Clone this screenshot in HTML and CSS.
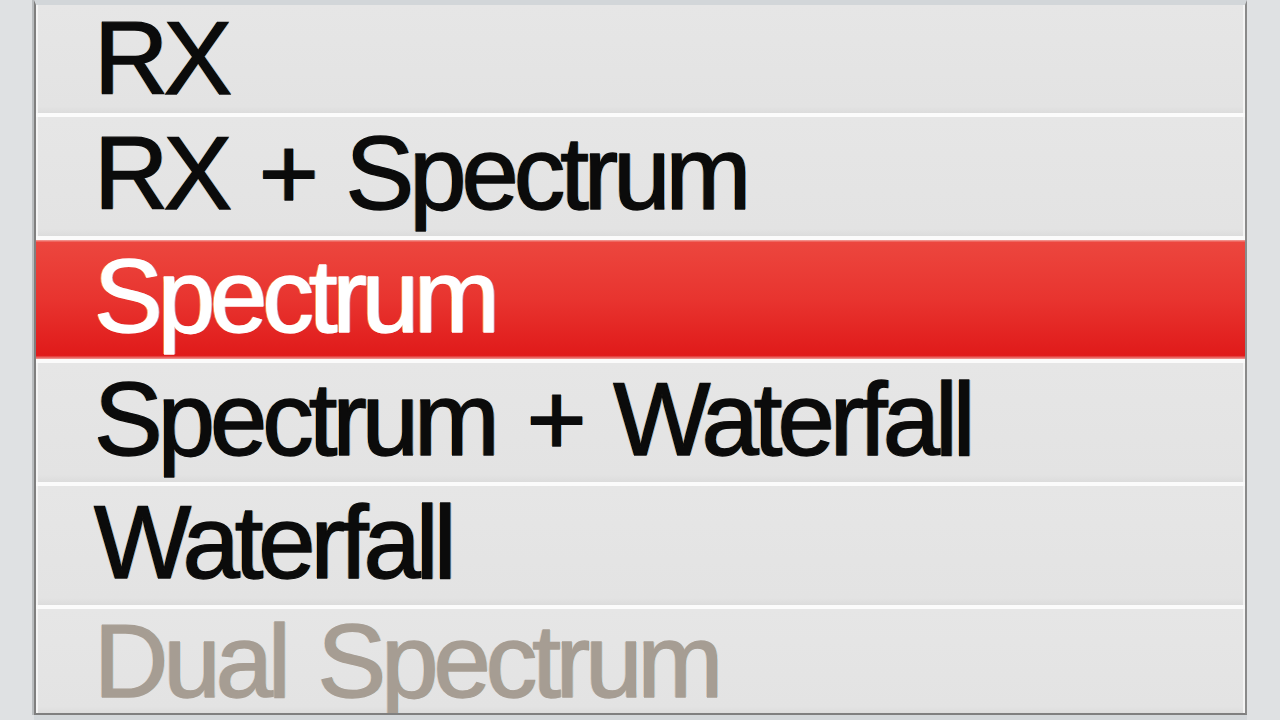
FILE: index.html
```html
<!DOCTYPE html>
<html>
<head>
<meta charset="utf-8">
<link rel="stylesheet" href="styles.css">
</head>
<body>
<div class="page">
  <ul class="menu">
    <li class="item first">RX</li>
    <li class="item">RX + Spectrum</li>
    <li class="item selected">Spectrum</li>
    <li class="item">Spectrum + Waterfall</li>
    <li class="item">Waterfall</li>
    <li class="item last disabled">Dual Spectrum</li>
  </ul>
</div>
</body>
</html>
```
FILE: styles.css
```css
html, body {
  margin: 0;
  padding: 0;
}
body {
  background: #dfe1e3;
  width: 1280px;
  height: 720px;
  overflow: hidden;
  font-family: "Liberation Sans", Arial, sans-serif;
}
.page {
  padding-left: 34px;
  height: 720px;
  box-sizing: border-box;
}
.menu {
  list-style: none;
  margin: 0;
  padding: 0;
  width: 1213px;
  height: 715px;
  box-sizing: border-box;
  border-top: 5px solid #d2d6d9;
  border-left: 2px solid #7f7f7f;
  border-right: 2px solid #8a8a8a;
  border-bottom: 2px solid #7f7f7f;
  box-shadow: -2px 0 0 #b9bcbe, 0 5px 0 #d3d7da;
  display: flex;
  flex-direction: column;
  background: #e4e4e4;
  overflow: hidden;
}
.item {
  flex: none;
  box-sizing: content-box;
  border-bottom: 4px solid #fbfbfb;
  background: linear-gradient(#e6e6e6, #e3e3e3 94%, #dcdcdc);
  box-shadow: inset 2px 0 0 #f4f4f4, inset -2px 0 0 #f4f4f4;
  padding-left: 58px;
  font-size: 103px;
  line-height: 103px;
  letter-spacing: -5px;
  word-spacing: 8px;
  color: #0b0b0b;
  -webkit-text-stroke: 1.3px #0b0b0b;
  text-shadow: -1.5px 0 rgba(240, 140, 20, 0.55), 1.5px 0 rgba(20, 140, 240, 0.55);
  padding-top: 5px;
  height: 114px;
  white-space: nowrap;
}
.item.first {
  padding-top: 2px;
  height: 106px;
}
.item.last {
  flex: 1 1 0;
  min-height: 0;
  height: auto;
  border-bottom: none;
  padding-top: 3px;
  line-height: 100px;
}
.item.selected {
  background: linear-gradient(#f3a09b, #ec463e 2%, #e8342f 50%, #e01a1a 97%, #f19c98);
  color: #ffffff;
  -webkit-text-stroke: 1.3px #ffffff;
  box-shadow: none;
  text-shadow: -1.5px 0 rgba(255, 230, 120, 0.6), 1.5px 0 rgba(200, 220, 255, 0.6);
}
.item.disabled {
  color: #a69d93;
  -webkit-text-stroke: 1.3px #a69d93;
  text-shadow: -1.5px 0 rgba(230, 160, 90, 0.4), 1.5px 0 rgba(120, 190, 230, 0.4);
}
```
